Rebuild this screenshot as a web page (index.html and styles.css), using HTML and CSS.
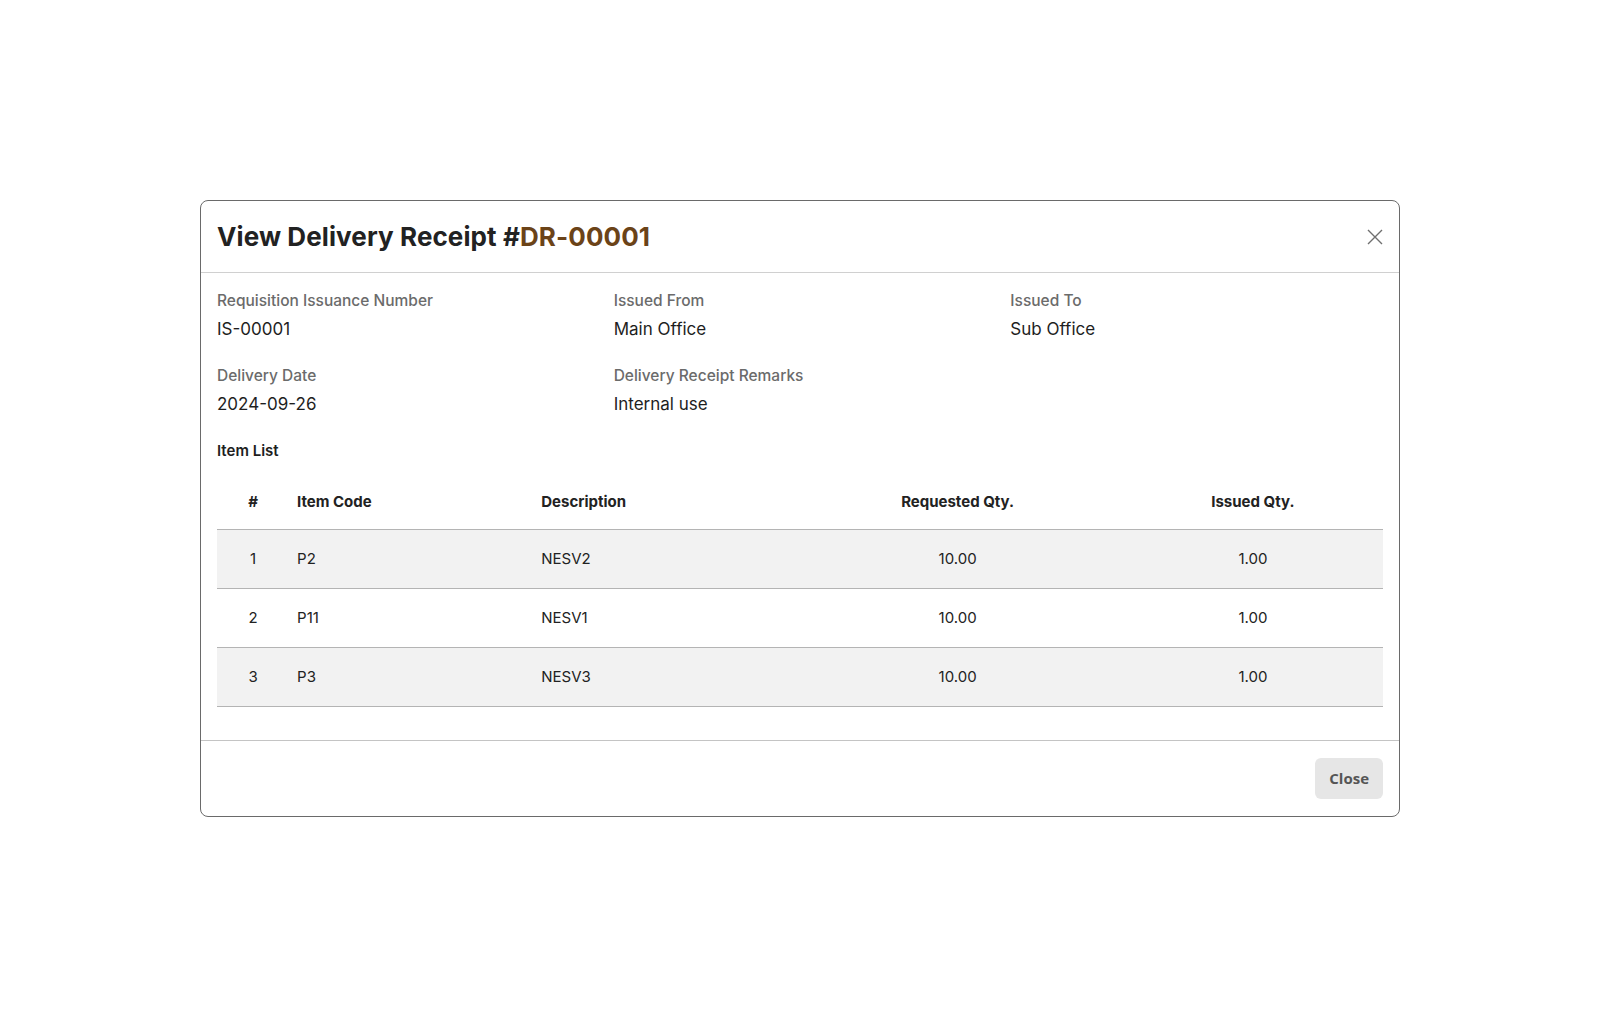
FILE: index.html
```html
<!DOCTYPE html>
<html lang="en">
<head>
    <meta charset="UTF-8">
    <meta name="viewport" content="width=device-width, initial-scale=1.0">
    <title>View Delivery Receipt</title>
    <link rel="stylesheet" href="styles.css">
</head>
<body>
    <div class="page">
        <div class="modal">
            <div class="modalHeader">
                <h2 class="modalTitle">View Delivery Receipt #<span class="receiptNo">DR-00001</span></h2>
                <button class="closeIcon" aria-label="Close">
                    <svg width="16" height="16" viewBox="0 0 16 16">
                        <path d="M1 1 L15 15 M15 1 L1 15" stroke="#6f6f6f" stroke-width="1.4" fill="none"/>
                    </svg>
                </button>
            </div>

            <div class="modalBody">
                <div class="fieldGrid">
                    <div class="field">
                        <div class="fieldLabel">Requisition Issuance Number</div>
                        <div class="fieldValue">IS-00001</div>
                    </div>
                    <div class="field">
                        <div class="fieldLabel">Issued From</div>
                        <div class="fieldValue">Main Office</div>
                    </div>
                    <div class="field">
                        <div class="fieldLabel">Issued To</div>
                        <div class="fieldValue">Sub Office</div>
                    </div>
                    <div class="field">
                        <div class="fieldLabel">Delivery Date</div>
                        <div class="fieldValue">2024-09-26</div>
                    </div>
                    <div class="field">
                        <div class="fieldLabel">Delivery Receipt Remarks</div>
                        <div class="fieldValue">Internal use</div>
                    </div>
                </div>

                <div class="sectionTitle">Item List</div>

                <table class="itemTable">
                    <colgroup>
                        <col class="colNo">
                        <col class="colCode">
                        <col class="colDesc">
                        <col class="colReq">
                        <col class="colIssued">
                    </colgroup>
                    <thead>
                        <tr>
                            <th class="center">#</th>
                            <th>Item Code</th>
                            <th>Description</th>
                            <th class="center">Requested Qty.</th>
                            <th class="center">Issued Qty.</th>
                        </tr>
                    </thead>
                    <tbody>
                        <tr>
                            <td class="center">1</td>
                            <td>P2</td>
                            <td>NESV2</td>
                            <td class="center">10.00</td>
                            <td class="center">1.00</td>
                        </tr>
                        <tr>
                            <td class="center">2</td>
                            <td>P11</td>
                            <td>NESV1</td>
                            <td class="center">10.00</td>
                            <td class="center">1.00</td>
                        </tr>
                        <tr>
                            <td class="center">3</td>
                            <td>P3</td>
                            <td>NESV3</td>
                            <td class="center">10.00</td>
                            <td class="center">1.00</td>
                        </tr>
                    </tbody>
                </table>
            </div>

            <div class="modalFooter">
                <button class="closeBtn">Close</button>
            </div>
        </div>
    </div>
</body>
</html>
```

FILE: styles.css
```css
body {
    margin: 0;
    padding: 0;
    background-color: #ffffff;
    color: #222222;
    font-family: 'Inter', 'Noto Sans', sans-serif;
}

.page {
    padding: 200px 200px 0 200px;
}

.modal {
    border: 1px solid #6a6a6a;
    border-radius: 8px;
    background-color: #ffffff;
}

.modalHeader {
    display: flex;
    align-items: center;
    justify-content: space-between;
    height: 71px;
    padding: 0 16px;
    border-bottom: 1px solid #d0d0d0;
}

.modalTitle {
    margin: 0;
    font-size: 26px;
    font-weight: 700;
    color: #222222;
    letter-spacing: 0.1px;
}

.receiptNo {
    color: #6b4318;
}

.closeIcon {
    border: none;
    background: none;
    padding: 0;
    width: 16px;
    height: 16px;
    cursor: pointer;
}

.modalBody {
    padding: 17px 16px 16px 16px;
}

.fieldGrid {
    display: grid;
    grid-template-columns: repeat(3, 1fr);
    column-gap: 24px;
    row-gap: 24px;
}

.fieldLabel {
    font-size: 15.5px;
    line-height: 22px;
    color: #6b6b6b;
    font-weight: 500;
    margin-bottom: 5px;
}

.fieldValue {
    font-size: 17px;
    line-height: 24px;
    color: #1e1e1e;
}

.sectionTitle {
    margin-top: 24px;
    margin-bottom: 11px;
    font-size: 15px;
    line-height: 22px;
    font-weight: 600;
    color: #1e1e1e;
}

.itemTable {
    width: 100%;
    border-collapse: collapse;
    table-layout: fixed;
    font-size: 15px;
    margin-bottom: 17px;
}

.colNo { width: 72px; }
.colCode { width: 244px; }
.colDesc { width: 259px; }
.colReq { width: 330px; }
.colIssued { width: 260px; }

.itemTable th,
.itemTable td {
    height: 59px;
    padding: 0 8px;
    text-align: left;
    line-height: 22px;
    border-bottom: 1px solid #b4b4b4;
    box-sizing: border-box;
}

.itemTable th {
    height: 56px;
    padding-top: 2px;
    font-weight: 700;
    color: #222222;
}

.itemTable td {
    color: #222222;
}

.itemTable tbody tr:nth-child(odd) {
    background-color: #f2f2f2;
}

.itemTable .center {
    text-align: center;
}

.modalFooter {
    display: flex;
    justify-content: flex-end;
    padding: 17px 16px;
    border-top: 1px solid #c4c4c4;
}

.closeBtn {
    height: 41px;
    padding: 0 14px;
    border: none;
    border-radius: 6px;
    background-color: #e6e6e6;
    color: #555555;
    font-family: 'Open Sans', sans-serif;
    font-size: 15px;
    font-weight: 700;
    cursor: pointer;
}
```
